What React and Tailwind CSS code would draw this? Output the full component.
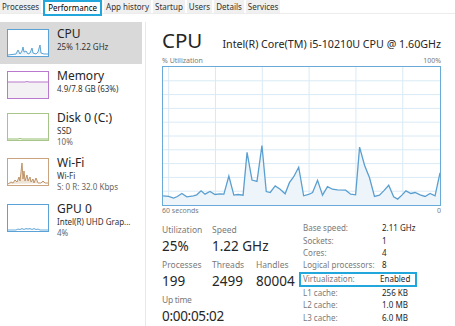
import React from 'react'

const tabs = ['Processes', 'Performance', 'App history', 'Startup', 'Users', 'Details', 'Services']

// main graph points, in the coordinates of a 837x420 box starting at (38,18)
const cpuPoints = [
  [38, 410], [55, 412], [70, 417], [80, 413], [95, 403], [110, 413], [130, 410], [140, 407],
  [153, 395], [165, 405], [180, 397], [195, 406], [210, 404], [222, 405], [237, 350], [252, 408],
  [265, 406], [280, 408], [292, 278], [307, 362], [322, 366], [337, 257], [350, 397], [362, 400],
  [377, 380], [392, 390], [407, 404], [420, 370], [433, 352], [448, 323], [463, 410], [478, 406],
  [490, 400], [505, 363], [520, 408], [535, 382], [550, 390], [565, 392], [590, 393], [605, 405],
  [620, 407], [632, 262], [647, 317], [662, 355], [677, 412], [692, 408], [705, 395], [720, 378],
  [735, 413], [747, 420], [760, 408], [772, 395], [787, 403], [800, 400], [815, 407], [830, 412],
  [845, 403], [860, 410], [875, 340],
]

function CpuGraph() {
  const line = cpuPoints.map((p) => p.join(',')).join(' ')
  const area = `38,438 ${line} 875,438`
  const vlines = [55, 196.5, 338, 479.5, 621, 762.5]
  const hlines = [60, 102, 144, 186, 228, 270, 312, 354, 396]
  return (
    <svg viewBox="38 18 837 420" preserveAspectRatio="none" className="block h-full w-full">
      {vlines.map((x) => (
        <line key={x} x1={x} y1="18" x2={x} y2="438" stroke="#d9eaf5" strokeWidth="1" vectorEffect="non-scaling-stroke" />
      ))}
      {hlines.map((y) => (
        <line key={y} x1="38" y1={y} x2="875" y2={y} stroke="#d9eaf5" strokeWidth="1" vectorEffect="non-scaling-stroke" />
      ))}
      <polygon points={area} fill="#eef5fa" />
      <polyline points={line} fill="none" stroke="#5a9fd0" strokeWidth="1.3" vectorEffect="non-scaling-stroke" />
    </svg>
  )
}

function Thumb({ color, children }) {
  return (
    <div className="h-[28px] w-[42px] shrink-0 border bg-white" style={{ borderColor: color }}>
      <svg viewBox="0 0 40 26" preserveAspectRatio="none" className="block h-full w-full">
        {children}
      </svg>
    </div>
  )
}

const items = [
  {
    name: 'CPU',
    lines: ['25% 1.22 GHz'],
    color: '#5ba3d6',
    h: 'h-[42px]',
    selected: true,
    graph: (
      <polyline
        points="0,25 4,24.5 8,24 10,20 12,24 14,21 15,17 16,22 18,21 20,24 22,23 24,18 25,23 28,24 30,22 32,15 33,23 36,24 40,24"
        fill="#e6f0f8"
        stroke="#5ba3d6"
        strokeWidth="1"
      />
    ),
  },
  {
    name: 'Memory',
    lines: ['4.9/7.8 GB (63%)'],
    color: '#b979cc',
    h: 'h-[42px]',
    graph: (
      <>
        <rect x="0" y="10" width="40" height="16" fill="#f3f1f3" />
        <polyline points="0,10 17,10 19,9.5 21,10 40,10" fill="none" stroke="#b979cc" strokeWidth="1" />
      </>
    ),
  },
  {
    name: 'Disk 0 (C:)',
    lines: ['SSD', '10%'],
    color: '#a7c58b',
    h: 'h-[45px]',
    graph: <polyline points="0,25 10,25 12,24.5 14,25 40,25" fill="none" stroke="#93bd6c" strokeWidth="1" />,
  },
  {
    name: 'Wi-Fi',
    lines: ['Wi-Fi', 'S: 0 R: 32.0 Kbps'],
    color: '#c9a47f',
    h: 'h-[46px]',
    graph: (
      <polyline
        points="0,25 3,23 5,24 7,21 9,23 11,18 12,22 14,4 15,20 16,12 17,22 19,16 20,22 22,18 23,23 25,20 26,24 28,19 30,24 33,24 35,22 37,24 40,24"
        fill="#efe3d6"
        stroke="#b88a5c"
        strokeWidth="0.9"
      />
    ),
  },
  {
    name: 'GPU 0',
    lines: ['Intel(R) UHD Grap...', '4%'],
    color: '#5ba3d6',
    h: 'h-[45px]',
    graph: (
      <polyline
        points="0,25 8,25 10,24 12,24.5 14,23.5 16,24.5 18,23.5 20,24 22,23.5 24,24.5 26,23.5 28,24.5 30,24 32,25 40,25"
        fill="#e6f0f8"
        stroke="#5ba3d6"
        strokeWidth="0.9"
      />
    ),
  },
]

function Stat({ label, value, className = '' }) {
  return (
    <div className={className}>
      <div className="text-[8.5px] leading-[11px] text-[#7a7a7a]">{label}</div>
      <div className="mt-[1.5px] whitespace-nowrap text-[13.5px] leading-[18px] text-[#262626]">{value}</div>
    </div>
  )
}

const specs = [
  ['Base speed:', '2.11 GHz'],
  ['Sockets:', '1'],
  ['Cores:', '4'],
  ['Logical processors:', '8'],
  ['Virtualization:', 'Enabled'],
  ['L1 cache:', '256 KB'],
  ['L2 cache:', '1.0 MB'],
  ['L3 cache:', '6.0 MB'],
]

export default function App() {
  return (
    <div className="h-[326px] w-[455px] overflow-hidden bg-white text-[#262626]" style={{ fontFamily: '"Noto Sans", "Open Sans", sans-serif' }}>
      {/* tab strip */}
      <div className="flex h-[14px] items-start gap-[2px] border-b border-[#ececec]">
        {tabs.map((t) =>
          t === 'Performance' ? (
            <div key={t} className="relative z-10 flex h-[16px] items-start border-2 border-[#22a7dd] bg-white px-[3px] text-[8px] leading-[11px] text-black">
              {t}
            </div>
          ) : (
            <div key={t} className="flex h-[13px] items-center bg-[#f0f0f0] px-[2px] text-[8px] leading-[11px] text-[#333]">
              {t}
            </div>
          )
        )}
      </div>

      <div className="flex h-[312px]">
        {/* side list */}
        <div className="w-[146px] shrink-0 pt-[8px]">
          <div className="h-full border-r border-[#e8e8e8] pr-[3px]">
            {items.map((it) => (
              <div key={it.name} className={`flex gap-[8px] pl-[7px] pt-[7px] ${it.h} ${it.selected ? 'bg-[#d9d9d9]' : ''}`}>
                <Thumb color={it.color}>{it.graph}</Thumb>
                <div className="-mt-[3px] min-w-0">
                  <div className="text-[12px] leading-[15px] text-[#262626]">{it.name}</div>
                  {it.lines.map((l, i) => (
                    <div key={i} className={`whitespace-nowrap text-[8px] leading-[11px] ${i === 1 ? 'text-[#666]' : 'text-[#333]'}`}>
                      {l}
                    </div>
                  ))}
                </div>
              </div>
            ))}
          </div>
        </div>

        {/* detail pane */}
        <div className="flex-1 pl-[16px] pr-[14px] pt-[12px]">
          <div className="flex items-baseline justify-between">
            <span className="text-[20.5px] leading-[28px] text-[#262626]">CPU</span>
            <span className="whitespace-nowrap text-[10.7px] text-[#262626]">Intel(R) Core(TM) i5-10210U CPU @ 1.60GHz</span>
          </div>
          <div className="mt-[2px] flex justify-between text-[7px] leading-[10px] text-[#7a7a7a]">
            <span>% Utilization</span>
            <span>100%</span>
          </div>
          <div className="h-[140px] border border-[#6aaad8]">
            <CpuGraph />
          </div>
          <div className="flex justify-between text-[7px] leading-[10px] text-[#7a7a7a]">
            <span>60 seconds</span>
            <span>0</span>
          </div>

          <div className="mt-[8px] flex">
            <div className="w-[140px] shrink-0">
              <div className="flex">
                <Stat label="Utilization" value="25%" className="w-[50px]" />
                <Stat label="Speed" value="1.22 GHz" />
              </div>
              <div className="mt-[4.5px] flex">
                <Stat label="Processes" value="199" className="w-[50px]" />
                <Stat label="Threads" value="2499" className="w-[44px]" />
                <Stat label="Handles" value="80004" />
              </div>
              <Stat label="Up time" value="0:00:05:02" className="mt-[4.5px] tracking-[-0.3px]" />
            </div>
            <div className="-ml-[3px] mt-[-2px] flex-1">
              {specs.map(([k, v]) =>
                k === 'Virtualization:' ? (
                  <div key={k} className="flex h-[15px] w-[118px] items-center border-2 border-[#22a7dd] pl-[2px] text-[8px]">
                    <span className="w-[77px] text-[#7a7a7a]">{k}</span>
                    <span className="text-[#262626]">{v}</span>
                  </div>
                ) : (
                  <div key={k} className="flex h-[12.4px] items-center pl-[4px] text-[8px]">
                    <span className="w-[79px] whitespace-nowrap text-[#7a7a7a]">{k}</span>
                    <span className="text-[#262626]">{v}</span>
                  </div>
                )
              )}
            </div>
          </div>
        </div>
      </div>
    </div>
  )
}
